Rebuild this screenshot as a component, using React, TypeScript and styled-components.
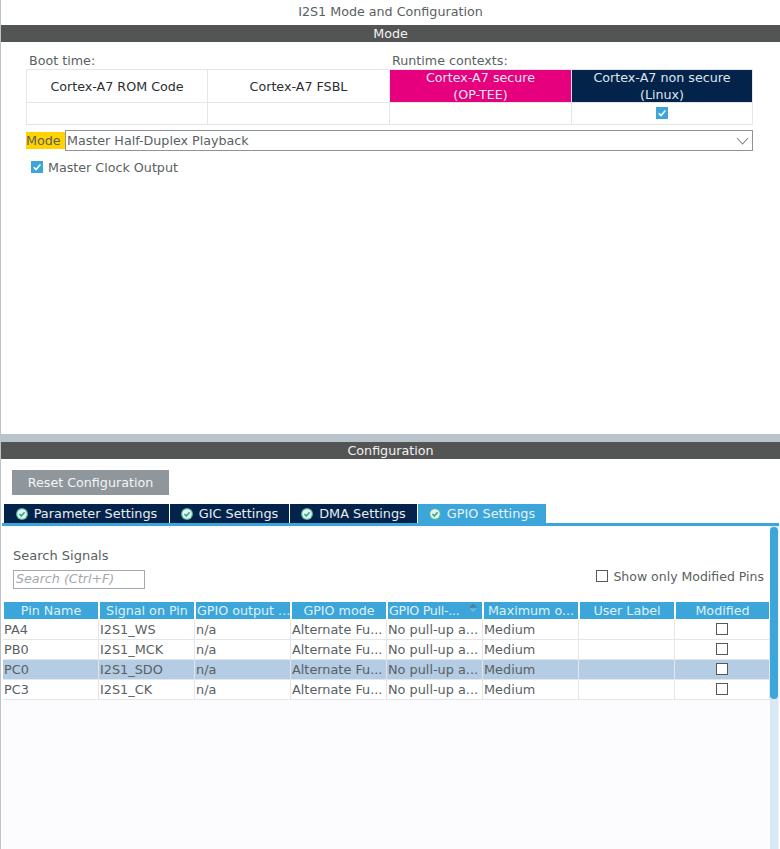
import React from 'react';
import styled, { createGlobalStyle } from 'styled-components';

const COLUMNS = ['Pin Name', 'Signal on Pin', 'GPIO output ...', 'GPIO mode', 'GPIO Pull-...', 'Maximum o...', 'User Label', 'Modified'];
const PINS = [
	{ pin: 'PA4', signal: 'I2S1_WS' },
	{ pin: 'PB0', signal: 'I2S1_MCK' },
	{ pin: 'PC0', signal: 'I2S1_SDO', selected: true },
	{ pin: 'PC3', signal: 'I2S1_CK' },
];
const TABS = [
	{ label: 'Parameter Settings', width: 165 },
	{ label: 'GIC Settings', width: 119 },
	{ label: 'DMA Settings', width: 127 },
	{ label: 'GPIO Settings', width: 128, active: true },
];

const GlobalStyle = createGlobalStyle`
	html, body {
		margin: 0;
		padding: 0;
		background: #ffffff;
	}
	body {
		font-family: "DejaVu Sans", sans-serif;
		font-size: 12.7px;
		color: #5a5f63;
	}
`;

const CheckMark = () => (
	<svg width="12" height="12" viewBox="0 0 12 12">
		<rect width="12" height="12" fill="#3ca6da" />
		<path d="M2.8 6.2 L5 8.6 L9.4 3.6" fill="none" stroke="#ffffff" strokeWidth="1.5" />
	</svg>
);

const StatusIcon = () => (
	<svg width="12" height="12" viewBox="0 0 12 12">
		<circle cx="6" cy="6" r="6" fill="#4fb89c" />
		<circle cx="6" cy="6" r="4.8" fill="#e4f4ef" />
		<path d="M3.4 6 L5.3 7.9 L8.6 4.3" fill="none" stroke="#3fa98c" strokeWidth="1.7" />
	</svg>
);

const App = () => (
	<Page>
		<GlobalStyle />
		<Title>I2S1 Mode and Configuration</Title>
		<SectionBar>Mode</SectionBar>
		<ModePanel>
			<ContextLabels>
				<span>Boot time:</span>
				<span>Runtime contexts:</span>
			</ContextLabels>
			<ContextGrid>
				<ContextHead>Cortex-A7 ROM Code</ContextHead>
				<ContextHead>Cortex-A7 FSBL</ContextHead>
				<ContextHead $bg="#e6007e">Cortex-A7 secure<br />(OP-TEE)</ContextHead>
				<ContextHead $bg="#03234b">Cortex-A7 non secure<br />(Linux)</ContextHead>
				<ContextCell />
				<ContextCell />
				<ContextCell />
				<ContextCell><CheckMark /></ContextCell>
			</ContextGrid>
			<ModeRow>
				<ModeLabel>Mode</ModeLabel>
				<ModeSelect>
					Master Half-Duplex Playback
					<svg width="13" height="8" viewBox="0 0 13 8">
						<path d="M1 1 L6.5 7 L12 1" fill="none" stroke="#7d8184" strokeWidth="1.1" />
					</svg>
				</ModeSelect>
			</ModeRow>
			<ClockRow>
				<CheckMark />
				Master Clock Output
			</ClockRow>
		</ModePanel>
		<Splitter />
		<SectionBar>Configuration</SectionBar>
		<ConfigPanel>
			<ResetButton>Reset Configuration</ResetButton>
			<TabBar>
				{TABS.map(tab => (
					<Tab key={tab.label} $width={tab.width} $active={tab.active}>
						<StatusIcon />
						{tab.label}
					</Tab>
				))}
			</TabBar>
			<TabBody>
				<TabContent>
					<SearchRow>
						<SearchBlock>
							<SearchTitle>Search Signals</SearchTitle>
							<SearchBox>Search (Ctrl+F)</SearchBox>
						</SearchBlock>
						<ModifiedFilter>
							<EmptyBox />
							Show only Modified Pins
						</ModifiedFilter>
					</SearchRow>
					<Table>
						<HeadRow>
							{COLUMNS.map(col => (
								<HeadCell
									key={col}
									$left={col === 'GPIO output ...' || col === 'GPIO Pull-...'}
									$sorted={col === 'GPIO Pull-...'}
								>
									{col}
									{col === 'GPIO Pull-...' && (
										<SortIcon width="8" height="8" viewBox="0 0 8 8">
											<path d="M4 0 L8 3.6 L0 3.6 Z" fill="#4a7d99" />
											<path d="M0 4.4 L8 4.4 L4 8 Z" fill="#6fb4d8" />
										</SortIcon>
									)}
								</HeadCell>
							))}
						</HeadRow>
						{PINS.map(row => (
							<BodyRow key={row.pin} $selected={row.selected}>
								<BodyCell>{row.pin}</BodyCell>
								<BodyCell>{row.signal}</BodyCell>
								<BodyCell>n/a</BodyCell>
								<BodyCell>Alternate Fu...</BodyCell>
								<BodyCell>No pull-up a...</BodyCell>
								<BodyCell>Medium</BodyCell>
								<BodyCell />
								<BodyCell $center><RowBox /></BodyCell>
							</BodyRow>
						))}
					</Table>
				</TabContent>
				<ScrollTrack>
					<ScrollThumb />
				</ScrollTrack>
			</TabBody>
		</ConfigPanel>
	</Page>
);

const Page = styled.div`
	width: 780px;
	height: 849px;
	box-sizing: border-box;
	border-left: 1px solid #b9c3cb;
	display: flex;
	flex-direction: column;
	overflow: hidden;
`;

const Title = styled.div`
	height: 25px;
	line-height: 24px;
	text-align: center;
`;

const SectionBar = styled.div`
	height: 17px;
	line-height: 18px;
	background: #535555;
	color: #f2f2f2;
	text-align: center;
	overflow: hidden;
`;

const ModePanel = styled.div`
	height: 392px;
	padding: 0 27px 0 25px;
	box-sizing: border-box;
`;

const ContextLabels = styled.div`
	height: 27px;
	padding: 11px 0 0 3px;
	box-sizing: border-box;
	display: grid;
	grid-template-columns: 363px 1fr;
	line-height: 16px;
`;

const ContextGrid = styled.div`
	display: grid;
	grid-template-columns: 181px 182px 182px 181px;
	grid-template-rows: 33px 22px;
	border: 1px solid #e4e7ea;
	box-sizing: border-box;
	width: 727px;
	height: 56px;
`;

const ContextHead = styled.div<{ $bg?: string }>`
	display: flex;
	align-items: center;
	justify-content: center;
	text-align: center;
	padding-top: ${props => (props.$bg ? '0' : '1px')};
	line-height: 17px;
	background: ${props => props.$bg || '#ffffff'};
	color: ${props => (props.$bg ? '#dfe6ee' : '#2c2f31')};
	border-right: 1px solid #e4e7ea;
	border-bottom: 1px solid #e4e7ea;
	box-sizing: border-box;
`;

const ContextCell = styled.div`
	display: flex;
	align-items: center;
	justify-content: center;
	padding-bottom: 2px;
	border-right: 1px solid #e4e7ea;
	box-sizing: border-box;
`;

const ModeRow = styled.div`
	display: flex;
	align-items: center;
	margin-top: 5px;
	width: 727px;
	height: 21px;
`;

const ModeLabel = styled.div`
	width: 39px;
	height: 17px;
	line-height: 17px;
	background: #ffd200;
	flex: none;
`;

const ModeSelect = styled.div`
	flex: 1;
	height: 21px;
	box-sizing: border-box;
	border: 1px solid #8f9396;
	display: flex;
	align-items: center;
	justify-content: space-between;
	padding: 0 3px 0 1px;
`;

const ClockRow = styled.div`
	display: flex;
	align-items: center;
	gap: 5px;
	margin: 9px 0 0 5px;
	height: 14px;
`;

const Splitter = styled.div`
	height: 8px;
	background: #b9c3cb;
	flex: none;
`;

const ConfigPanel = styled.div`
	flex: 1;
	display: flex;
	flex-direction: column;
	padding-top: 11px;
	min-height: 0;
`;

const ResetButton = styled.div`
	width: 157px;
	height: 25px;
	margin-left: 11px;
	line-height: 25px;
	text-align: center;
	background: #8f979d;
	color: #f4f5f6;
`;

const TabBar = styled.div`
	display: flex;
	gap: 1px;
	margin: 9px 0 0 3px;
	height: 19px;
`;

const Tab = styled.div<{ $width: number; $active?: boolean }>`
	width: ${props => props.$width}px;
	display: flex;
	align-items: center;
	justify-content: center;
	gap: 6px;
	box-sizing: border-box;
	background: ${props => (props.$active ? '#3ca6da' : '#03234b')};
	color: ${props => (props.$active ? '#e4f2f9' : '#e8edf2')};
	font-size: 12.85px;
`;

const TabBody = styled.div`
	flex: 1;
	display: flex;
	margin: 0 1px 0 1px;
	border-top: 3px solid #3ca6da;
	min-height: 0;
`;

const TabContent = styled.div`
	width: 768px;
	flex: none;
	background: linear-gradient(#ffffff 174px, #fcfcfe 174px);
`;

const SearchRow = styled.div`
	height: 76px;
	padding: 22px 6px 0 11px;
	box-sizing: border-box;
	display: flex;
	justify-content: space-between;
`;

const SearchBlock = styled.div`
	display: flex;
	flex-direction: column;
	gap: 6px;
	line-height: 16px;
`;

const SearchTitle = styled.span`
	font-size: 13px;
`;

const SearchBox = styled.div`
	width: 132px;
	height: 19px;
	box-sizing: border-box;
	border: 1px solid #a6aaad;
	padding-left: 2px;
	line-height: 16px;
	font-style: italic;
	color: #a4a8ab;
`;

const ModifiedFilter = styled.div`
	display: flex;
	align-items: center;
	gap: 5px;
	margin-top: 21px;
	height: 14px;
	font-size: 12.5px;
`;

const EmptyBox = styled.span`
	display: inline-block;
	width: 12px;
	height: 12px;
	box-sizing: border-box;
	border: 1px solid #55595c;
	background: #ffffff;
	flex: none;
`;

const RowBox = styled(EmptyBox)`
	margin: 0 1px 2px 0;
`;

const Table = styled.div`
	padding-left: 1px;
`;

const rowGrid = `
	display: grid;
	grid-template-columns: repeat(7, 95px) 94px;
	column-gap: 1px;
`;

const HeadRow = styled.div`
	${rowGrid}
	height: 18px;
`;

const HeadCell = styled.div<{ $left?: boolean; $sorted?: boolean }>`
	position: relative;
	background: #3ca6da;
	color: #dff0f8;
	height: 17px;
	margin-left: 1px;
	line-height: 17px;
	white-space: nowrap;
	overflow: hidden;
	letter-spacing: ${props => (props.$sorted ? '-0.3px' : 'normal')};
	text-align: ${props => (props.$left ? 'left' : 'center')};
	padding-left: ${props => (props.$left ? '1px' : '0')};
`;

const SortIcon = styled.svg`
	position: absolute;
	right: 5px;
	top: 2px;
`;

const BodyRow = styled.div<{ $selected?: boolean }>`
	${rowGrid}
	height: 20px;
	box-sizing: border-box;
	background: ${props => (props.$selected ? '#b4cce4' : '#ffffff')};
	border-bottom: 1px solid #e4e6e8;
`;

const BodyCell = styled.div<{ $center?: boolean }>`
	display: flex;
	align-items: center;
	justify-content: ${props => (props.$center ? 'center' : 'flex-start')};
	padding-left: 1px;
	font-size: 12.85px;
	white-space: nowrap;
	box-shadow: 1px 0 0 #e4e6e8;
`;

const ScrollTrack = styled.div`
	width: 9px;
	box-sizing: border-box;
	flex: none;
	background: #d8e8f5;
	border-right: 1px solid #eef3fa;
`;

const ScrollThumb = styled.div`
	width: 8px;
	height: 172px;
	margin-top: 1px;
	background: #3ca6da;
	border-radius: 4px;
`;

export default App;
